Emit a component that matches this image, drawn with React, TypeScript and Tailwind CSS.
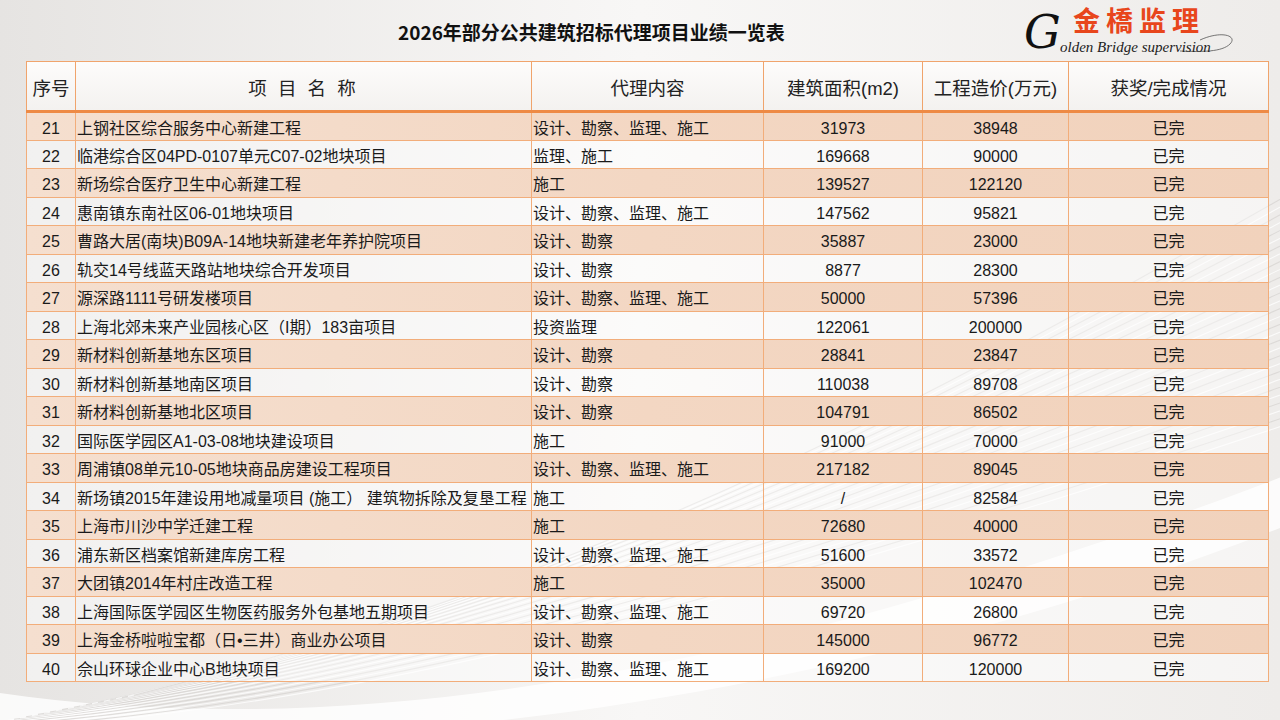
import React from 'react';

const ROWS = [
  { no: 21, name: '上钢社区综合服务中心新建工程', scope: '设计、勘察、监理、施工', area: '31973', cost: '38948' },
  { no: 22, name: '临港综合区04PD-0107单元C07-02地块项目', scope: '监理、施工', area: '169668', cost: '90000' },
  { no: 23, name: '新场综合医疗卫生中心新建工程', scope: '施工', area: '139527', cost: '122120' },
  { no: 24, name: '惠南镇东南社区06-01地块项目', scope: '设计、勘察、监理、施工', area: '147562', cost: '95821' },
  { no: 25, name: '曹路大居(南块)B09A-14地块新建老年养护院项目', scope: '设计、勘察', area: '35887', cost: '23000' },
  { no: 26, name: '轨交14号线蓝天路站地块综合开发项目', scope: '设计、勘察', area: '8877', cost: '28300' },
  { no: 27, name: '源深路1111号研发楼项目', scope: '设计、勘察、监理、施工', area: '50000', cost: '57396' },
  { no: 28, name: '上海北郊未来产业园核心区（I期）183亩项目', scope: '投资监理', area: '122061', cost: '200000' },
  { no: 29, name: '新材料创新基地东区项目', scope: '设计、勘察', area: '28841', cost: '23847' },
  { no: 30, name: '新材料创新基地南区项目', scope: '设计、勘察', area: '110038', cost: '89708' },
  { no: 31, name: '新材料创新基地北区项目', scope: '设计、勘察', area: '104791', cost: '86502' },
  { no: 32, name: '国际医学园区A1-03-08地块建设项目', scope: '施工', area: '91000', cost: '70000' },
  { no: 33, name: '周浦镇08单元10-05地块商品房建设工程项目', scope: '设计、勘察、监理、施工', area: '217182', cost: '89045' },
  { no: 34, name: '新场镇2015年建设用地减量项目 (施工） 建筑物拆除及复垦工程', scope: '施工', area: '/', cost: '82584' },
  { no: 35, name: '上海市川沙中学迁建工程', scope: '施工', area: '72680', cost: '40000' },
  { no: 36, name: '浦东新区档案馆新建库房工程', scope: '设计、勘察、监理、施工', area: '51600', cost: '33572' },
  { no: 37, name: '大团镇2014年村庄改造工程', scope: '施工', area: '35000', cost: '102470' },
  { no: 38, name: '上海国际医学园区生物医药服务外包基地五期项目', scope: '设计、勘察、监理、施工', area: '69720', cost: '26800' },
  { no: 39, name: '上海金桥啦啦宝都（日•三井）商业办公项目', scope: '设计、勘察', area: '145000', cost: '96772' },
  { no: 40, name: '佘山环球企业中心B地块项目', scope: '设计、勘察、监理、施工', area: '169200', cost: '120000' },
];

const FONT = "font-['Liberation_Sans','Noto_Sans_CJK_SC',sans-serif]";

function Swooshes() {
  // faint curved lines of the slide background
  const lines = Array.from({ length: 30 }, (_, i) => i);
  return (
    <svg className="absolute inset-0 pointer-events-none" width="1280" height="720" viewBox="0 0 1280 720">
      <path d="M -20 690 C 300 740, 700 700, 1300 470 L 1300 520 C 800 720, 300 760, -20 730 Z" fill="#ffffff" opacity="0.8" />
      {lines.map((i) => (
        <path
          key={i}
          d={`M ${-40 + i * 6} ${730 - i * 1.2} C ${320 + i * 10} ${720 - i * 5}, ${760 + i * 6} ${600 - i * 7}, 1300 ${420 - i * 8}`}
          fill="none"
          stroke={i % 2 ? '#d6d3d0' : '#ffffff'}
          strokeWidth="1.1"
          opacity="0.75"
        />
      ))}
    </svg>
  );
}

function Logo() {
  return (
    <div className="relative w-[215px] h-[58px]">
      <svg className="absolute left-0 top-0" width="215" height="58" viewBox="0 0 215 58">
        <path d="M 178 40 C 200 30, 216 36, 208 44 C 200 52, 180 52, 158 51" fill="none" stroke="#555" strokeWidth="0.8" />
      </svg>
      <div className="absolute left-[2px] top-[8px] text-[46px] leading-[48px] italic text-[#111] font-['DejaVu_Serif',serif]">G</div>
      <div className="absolute left-[51px] top-[5px] text-[27px] leading-[30px] font-bold tracking-[6px] text-[#e8461c] font-['Noto_Sans_CJK_SC',sans-serif]">金橋监理</div>
      <div className="absolute left-[38px] top-[40px] text-[15px] leading-[15px] italic text-[#222] font-['Liberation_Serif',serif] whitespace-nowrap">
        olden Bridge supervision
      </div>
    </div>
  );
}

const TH = 'border border-[#f0a46c] border-b-[3px] border-b-[#ee8a45] font-normal pt-[5px]';
const TD = 'border border-[#f2ad7a] pt-[5px]';

export default function App() {
  return (
    <div className={`relative w-[1280px] h-[720px] overflow-hidden bg-gradient-to-r from-[#e6e4e2] via-[#f8f7f6] to-[#eeecea] ${FONT}`}>
      <Swooshes />
      <div className="relative flex flex-col">
        <div className="flex items-start h-[61px]">
          <h1 className="ml-[398px] mt-[20px] text-[19px] leading-[24px] font-bold text-[#111] font-['Noto_Sans_CJK_SC',sans-serif]">
            2026年部分公共建筑招标代理项目业绩一览表
          </h1>
          <div className="ml-auto mr-[43px]">
            <Logo />
          </div>
        </div>

        <table className="ml-[26px] w-[1242px] table-fixed border-collapse text-[#1a1a1a]">
          <colgroup>
            <col className="w-[49px]" />
            <col className="w-[456px]" />
            <col className="w-[232px]" />
            <col className="w-[159px]" />
            <col className="w-[146px]" />
            <col className="w-[200px]" />
          </colgroup>
          <thead>
            <tr className="h-[50px] bg-gradient-to-b from-[#fdfcfb] to-[#f3f1ef] text-[18.5px] text-[#222]">
              <th className={TH}>序号</th>
              <th className={`${TH} tracking-[3px]`}>项 目 名 称</th>
              <th className={TH}>代理内容</th>
              <th className={TH}>建筑面积(m2)</th>
              <th className={TH}>工程造价(万元)</th>
              <th className={TH}>获奖/完成情况</th>
            </tr>
          </thead>
          <tbody className="text-[16px] leading-none">
            {ROWS.map((r, i) => (
              <tr
                key={r.no}
                className={`h-[28.5px] ${i % 2 === 0 ? 'bg-gradient-to-r from-[#f5dfcf] via-[#f3d7c3] to-[#f1d2bc]' : 'bg-white/45'}`}
              >
                <td className={`${TD} text-center`}>{r.no}</td>
                <td className={`${TD} pl-[1px] whitespace-nowrap overflow-hidden`}>{r.name}</td>
                <td className={`${TD} pl-[1px] whitespace-nowrap`}>{r.scope}</td>
                <td className={`${TD} text-center`}>{r.area}</td>
                <td className={`${TD} text-center`}>{r.cost}</td>
                <td className={`${TD} text-center`}>已完</td>
              </tr>
            ))}
          </tbody>
        </table>
      </div>
    </div>
  );
}
